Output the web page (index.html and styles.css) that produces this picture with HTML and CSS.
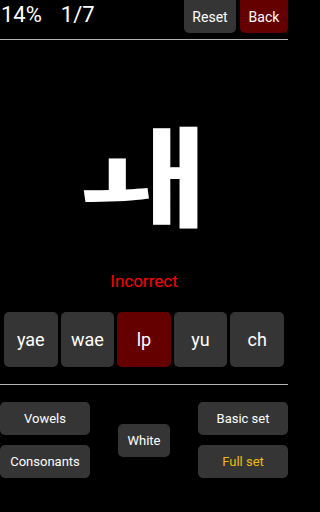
FILE: index.html
```html
<!DOCTYPE html>
<html>
<head>
<meta charset="utf-8">
<link rel="stylesheet" href="styles.css">
</head>
<body>
<div class="app">
  <header class="topbar">
    <div class="stats"><span class="pct">14%</span><span class="count">1/7</span></div>
    <div class="top-actions">
      <button class="btn top-btn">Reset</button>
      <button class="btn top-btn red">Back</button>
    </div>
  </header>
  <main class="quiz">
    <div class="stage"><span class="glyph">ㅙ</span></div>
    <div class="status">Incorrect</div>
    <div class="answers">
      <button class="btn ans">yae</button>
      <button class="btn ans">wae</button>
      <button class="btn ans red">lp</button>
      <button class="btn ans">yu</button>
      <button class="btn ans">ch</button>
    </div>
  </main>
  <footer class="options">
    <div class="col">
      <button class="btn opt">Vowels</button>
      <button class="btn opt">Consonants</button>
    </div>
    <button class="btn opt mid">White</button>
    <div class="col">
      <button class="btn opt">Basic set</button>
      <button class="btn opt gold">Full set</button>
    </div>
  </footer>
</div>
</body>
</html>
```
FILE: styles.css
```css
html, body {
  margin: 0;
  padding: 0;
  background: #000;
}
body {
  font-family: Roboto, "Noto Sans", sans-serif;
  color: #fff;
}
.app {
  width: 288px;
  height: 512px;
  display: flex;
  flex-direction: column;
  overflow: hidden;
}
.btn {
  font-family: Roboto, "Noto Sans", sans-serif;
  color: #fff;
  background: #353535;
  border: none;
  padding: 0;
  margin: 0;
  border-radius: 5px;
}
.btn.red {
  background: #650000;
}
.topbar {
  height: 39px;
  border-bottom: 1px solid #b4b4b4;
  display: flex;
  justify-content: space-between;
  align-items: flex-start;
}
.stats {
  display: flex;
  gap: 19px;
  font-size: 22px;
  line-height: 30px;
  padding-left: 1px;
}
.top-actions {
  display: flex;
  gap: 4px;
  padding-left: 0;
}
.top-btn {
  height: 33px;
  font-size: 14px;
  border-radius: 0 0 5px 5px;
}
.top-btn:first-child {
  width: 52px;
}
.top-btn.red {
  width: 48px;
}
.quiz {
  height: 344px;
  border-bottom: 1px solid #b4b4b4;
  display: flex;
  flex-direction: column;
}
.stage {
  height: 231px;
  display: flex;
  align-items: center;
  justify-content: center;
}
.glyph {
  font-family: "Noto Sans CJK KR", sans-serif;
  font-weight: 700;
  font-size: 110px;
  line-height: 1;
  color: #fff;
  transform: translate(-2px, 15px) scaleX(1.27);
}
.status {
  height: 20px;
  line-height: 20px;
  font-size: 17px;
  color: #f00;
  text-align: center;
}
.answers {
  margin-top: 21px;
  padding: 0 4px;
  display: flex;
  gap: 3px;
}
.ans {
  flex: 1;
  height: 55px;
  font-size: 18px;
  border-radius: 5px;
}
.options {
  padding-top: 17px;
  display: flex;
  justify-content: space-between;
  align-items: center;
}
.col {
  display: flex;
  flex-direction: column;
  gap: 10px;
}
.opt {
  width: 90px;
  height: 33px;
  font-size: 13px;
}
.opt.mid {
  width: 52px;
}
.opt.gold {
  color: #f0bb0c;
}
```
